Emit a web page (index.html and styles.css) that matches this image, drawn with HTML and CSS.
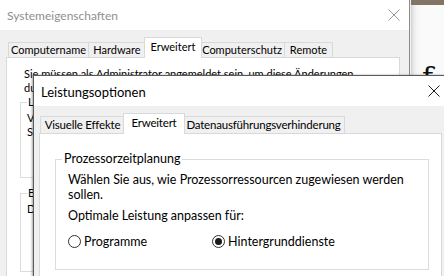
FILE: index.html
```html
<!DOCTYPE html>
<html lang="de">
<head>
<meta charset="utf-8">
<link rel="stylesheet" href="styles.css">
</head>
<body>
<div class="desk">
  <div class="win-back">
    <div class="titlebar">
      <span class="title title-back">Systemeigenschaften</span>
      <svg class="close close-back" width="12" height="12" viewBox="0 0 12 12"><path d="M0.5 0.5 L11.5 11.5 M11.5 0.5 L0.5 11.5" stroke="#9a9a9a" stroke-width="1" fill="none"/></svg>
    </div>
    <div class="body body-back">
      <div class="tabs">
        <div class="tab tb-1">Computername</div>
        <div class="tab tb-2">Hardware</div>
        <div class="tab active tb-3">Erweitert</div>
        <div class="tab tb-4">Computerschutz</div>
        <div class="tab tb-5">Remote</div>
      </div>
      <div class="panel panel-back">
        <p class="para">Sie müssen als Administrator angemeldet sein, um diese Änderungen<br>durchführen zu können.</p>
        <fieldset class="group-back g1">
          <legend>Leistung</legend>
          <p class="para">Visuelle Effekte, Prozessorzeitplanung, Speichernutzung<br>Speicher und virtueller Arbeitsspeicher</p>
        </fieldset>
        <fieldset class="group-back g2">
          <legend>Benutzerprofile</legend>
          <p class="para">Desktopeinstellungen bezüglich der Anmeldung</p>
        </fieldset>
      </div>
    </div>
  </div>

  <div class="win-side">
    <div class="side-top"></div>
    <div class="side-body"><span class="big-f">f</span></div>
  </div>

  <div class="win-front">
    <div class="titlebar titlebar-front">
      <span class="title title-front">Leistungsoptionen</span>
      <svg class="close close-front" width="12" height="12" viewBox="0 0 12 12"><path d="M0.5 0.5 L11.5 11.5 M11.5 0.5 L0.5 11.5" stroke="#1a1a1a" stroke-width="1" fill="none"/></svg>
    </div>
    <div class="body body-front">
      <div class="tabs tabs-front">
        <div class="tab tf tf-1">Visuelle Effekte</div>
        <div class="tab tf active tf-2">Erweitert</div>
        <div class="tab tf tf-3">Datenausführungsverhinderung</div>
      </div>
      <div class="panel panel-front">
        <fieldset class="group-front">
          <legend>Prozessorzeitplanung</legend>
          <p class="desc">Wählen Sie aus, wie Prozessorressourcen zugewiesen werden<br>sollen.</p>
          <p class="opt">Optimale Leistung anpassen für:</p>
          <div class="radios">
            <label class="radio"><span class="circle"></span>Programme</label>
            <label class="radio"><span class="circle checked"></span>Hintergrunddienste</label>
          </div>
        </fieldset>
      </div>
    </div>
  </div>
</div>
</body>
</html>
```

FILE: styles.css
```css
* { box-sizing: border-box; }
html, body { margin: 0; padding: 0; }
body { width: 444px; height: 276px; overflow: hidden; background: #f0f0f0; }

.desk {
  position: relative;
  width: 444px;
  height: 276px;
  overflow: hidden;
  font-family: Lato, "Liberation Sans", sans-serif;
  color: #000;
  white-space: nowrap;
}

p { margin: 0; }

/* ---------- background window ---------- */
.win-back {
  position: absolute;
  left: 0; top: 0;
  width: 410px;
  height: 300px;
  background: #f0f0f0;
  border-right: 1px solid #8c8c8c;
}
.titlebar {
  height: 30px;
  background: #fff;
  display: flex;
  align-items: center;
  justify-content: space-between;
  padding: 0 9px 0 7px;
}
.title-back { color: #8f8f8f; font-size: 12px; }

.body-back { padding: 6px 0 0 6px; width: 400px; }

.tabs { display: flex; align-items: flex-end; padding-left: 3px; height: 21px; }
.tab {
  height: 15px;
  border: 1px solid #d9d9d9;
  border-bottom: none;
  margin-left: -1px;
  background: #f0f0f0;
  font-size: 11px;
  line-height: 14px;
  text-align: center;
  position: relative;
  overflow: hidden;
}
.tab.active {
  height: 21px;
  background: #fff;
  margin: 0 -2px -1px -2px;
  line-height: 17px;
  z-index: 1;
}
.tb-1 { width: 81px; }
.tb-2 { width: 58px; }
.tb-3 { width: 58px; }
.tb-4 { width: 86px; }
.tb-5 { width: 49px; }

.panel-back {
  background: #fff;
  border: 1px solid #d9d9d9;
  height: 240px;
  padding: 9px 0 0 17px;
  font-size: 11px;
}
.panel-back .para { line-height: 14px; }
.group-back {
  margin: 1px 0 0 -4px;
  width: 360px;
  border: 1px solid #dcdcdc;
  padding: 3px 0 0 6px;
}
.group-back legend { padding: 0 1px; margin-left: 0; line-height: 12px; }
.g1 { height: 82px; }
.g2 { height: 85px; margin-top: 9px; }

/* ---------- side window ---------- */
.win-side {
  position: absolute;
  left: 411px; top: 0;
  width: 33px; height: 276px;
}
.side-top { height: 5px; background: #837465; }
.side-body {
  height: 271px;
  background: linear-gradient(to right, #d2d2d2 0px, #ececec 3px, #f6f6f6 6px, #fafafa 12px);
  position: relative;
  overflow: hidden;
}
.big-f {
  position: absolute;
  left: 11px; top: 58px;
  font-family: "DejaVu Serif", serif;
  font-size: 30px;
  line-height: 30px;
  color: #111;
}

/* ---------- front window ---------- */
.win-front {
  position: absolute;
  left: 33px; top: 75px;
  width: 420px;
  height: 220px;
  background: #f0f0f0;
  border-left: 1px solid #5a5a5a;
  border-top: 1px solid #5a5a5a;
  box-shadow: -1px 0 2px rgba(0,0,0,0.35);
}
.titlebar-front { padding: 0 13px 0 7px; height: 30px; }
.title-front { font-size: 13px; color: #000; padding-top: 1px; }

.body-front { padding: 6px 0 0 5px; }
.tabs-front { height: 21px; padding-left: 2px; }
.tf { height: 17px; font-size: 11.5px; letter-spacing: -0.2px; line-height: 16px; }
.tf.active { height: 21px; line-height: 18px; }
.tf-1 { width: 85px; }
.tf-2 { width: 62px; }
.tf-3 { width: 163px; }

.panel-front {
  background: #fff;
  border: 1px solid #d9d9d9;
  width: 403px;
  height: 160px;
  padding: 18px 0 0 15px;
}
.group-front {
  margin: 0;
  width: 374px;
  height: 118px;
  border: 1px solid #dcdcdc;
  padding: 6px 0 0 12px;
  font-size: 12.5px;
}
.group-front legend { padding: 0 2px; margin-left: -6px; line-height: 14px; }
.desc { line-height: 15px; }
.opt { margin-top: 6px; line-height: 15px; }
.radios { display: flex; margin-top: 11px; }
.radio { display: flex; align-items: center; line-height: 15px; }
.radio + .radio { margin-left: 65px; }
.circle {
  width: 13px; height: 13px;
  border: 1px solid #333;
  border-radius: 50%;
  margin-right: 3px;
  display: inline-flex;
  align-items: center;
  justify-content: center;
}
.circle.checked::after {
  content: "";
  width: 7px; height: 7px;
  border-radius: 50%;
  background: #1a1a1a;
}
```
